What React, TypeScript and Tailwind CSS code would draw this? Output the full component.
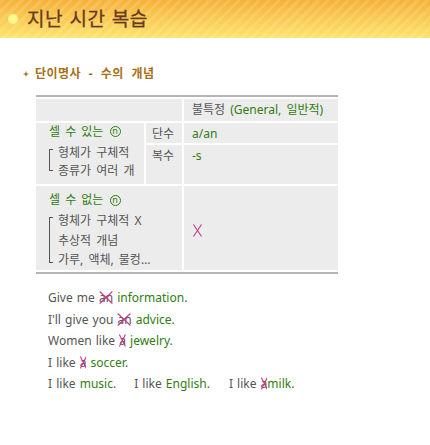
import React from "react";

const F = { fontFamily: '"Noto Sans", "Noto Sans CJK KR", sans-serif' };

function Cross({ w = 10, h = 13 }: { w?: number; h?: number }) {
  return (
    <svg width={w} height={h} viewBox={`0 0 ${w} ${h}`} className="block">
      <line x1="0.5" y1="0.5" x2={w - 0.5} y2={h - 0.5} stroke="#c9358a" strokeWidth="1.1" />
      <line x1={w - 0.5} y1="0.5" x2="0.5" y2={h - 0.5} stroke="#c9358a" strokeWidth="1.1" />
    </svg>
  );
}

function Struck({ children }: { children: React.ReactNode }) {
  return (
    <span className="relative inline-block">
      {children}
      <svg
        className="absolute top-[4px] left-0 w-full h-[13px]"
        viewBox="0 0 10 13"
        preserveAspectRatio="none"
      >
        <line x1="0.5" y1="0.5" x2="9.5" y2="12.5" stroke="#c9358a" strokeWidth="1.1" vectorEffect="non-scaling-stroke" />
        <line x1="9.5" y1="0.5" x2="0.5" y2="12.5" stroke="#c9358a" strokeWidth="1.1" vectorEffect="non-scaling-stroke" />
      </svg>
    </span>
  );
}

const G = ({ children }: { children: React.ReactNode }) => (
  <span className="text-[#2f7d12]">{children}</span>
);

const N = () => (
  <span className="inline-flex items-center justify-center w-[11px] h-[11px] rounded-full border border-[#2f7d12] text-[#2f7d12] text-[9px] leading-none align-[-1px] ml-[1px]">
    <span className="-mt-[2px]">n</span>
  </span>
);

export default function App() {
  return (
    <div className="w-[430px] h-[445px] bg-white text-[#555555] [word-spacing:2px]" style={F}>
      <div className="h-[38px] flex items-center bg-[image:repeating-linear-gradient(135deg,rgba(255,255,255,0.13)_0px,rgba(255,255,255,0.13)_3px,transparent_3px,transparent_7px),linear-gradient(to_bottom,#f6b13a,#fde46d)]">
        <div className="ml-[8px] w-[10px] h-[10px] rounded-full bg-[#fff78c]" />
        <div className="ml-[9px] text-[19px] font-normal text-[#6a3a20] leading-none tracking-[0.5px] [word-spacing:1px] [-webkit-text-stroke:0.3px_#6a3a20]">
          지난 시간 복습
        </div>
      </div>

      <div className="mt-[28px] flex items-center h-[16px]">
        <svg width="6" height="6" viewBox="0 0 6 6" className="ml-[23px]">
          <path d="M3 0 L3.8 2.2 L6 3 L3.8 3.8 L3 6 L2.2 3.8 L0 3 L2.2 2.2 Z" fill="#a66f15" />
        </svg>
        <div className="ml-[6px] text-[12px] font-bold text-[#a66f15] leading-none tracking-[0.5px] [word-spacing:4px]">
          단이명사 - 수의 개념
        </div>
      </div>

      <div className="ml-[36px] mt-[13px] w-[302px]">
        <div className="h-[2px] bg-[#b5b5b5]" />
        <div className="grid grid-cols-[108px_36px_154px] grid-rows-[22px_20px_39px_84px] gap-[2px] py-[2px] text-[12px] leading-[18px]">
          <div className="col-span-2 bg-[#ececec]" />
          <div className="bg-[#ececec] flex items-center pl-[8px] whitespace-nowrap">
            불특정&nbsp;<G>(General, 일반적)</G>
          </div>

          <div className="row-span-2 bg-[#ececec] pl-[13px]">
            <div className="leading-[16px] flex items-center h-[17px]"><G>셀 수 있는</G>&nbsp;<N /></div>
            <div className="flex mt-[4px]">
              <div className="mt-[5px] h-[22px] w-[4px] border-l border-t border-b border-[#555555]" />
              <div className="ml-[5px] leading-[18px] whitespace-nowrap">
                <div>형체가 구체적</div>
                <div>종류가 여러 개</div>
              </div>
            </div>
          </div>
          <div className="bg-[#ececec] flex items-center pl-[6px] pt-[1px]">단수</div>
          <div className="bg-[#ececec] flex items-center pl-[8px] pt-[1px]"><G>a/an</G></div>

          <div className="bg-[#ececec] pl-[6px] pt-[2px]">복수</div>
          <div className="bg-[#ececec] pl-[8px] pt-[2px]"><G>-s</G></div>

          <div className="col-span-2 bg-[#ececec] pl-[13px] pt-[5px]">
            <div className="leading-[18px] flex items-center"><G>셀 수 없는</G>&nbsp;<N /></div>
            <div className="flex mt-[2px]">
              <div className="mt-[6px] mb-[7px] w-[4px] border-l border-t border-b border-[#555555]" />
              <div className="ml-[5px] leading-[19.5px] whitespace-nowrap">
                <div>형체가 구체적 X</div>
                <div>추상적 개념</div>
                <div>가루, 액체, 물컹…</div>
              </div>
            </div>
          </div>
          <div className="bg-[#ececec] flex items-center pl-[9px] pt-[4px]">
            <Cross w={9} h={13} />
          </div>
        </div>
        <div className="h-[2px] bg-[#b5b5b5]" />
      </div>

      <div className="ml-[48px] mt-[13px] text-[12px] leading-[21.5px] [word-spacing:1px]">
        <div>
          Give me <Struck>an</Struck> <G>information</G>.
        </div>
        <div>
          I'll give you <Struck>an</Struck> <G>advice</G>.
        </div>
        <div>
          Women like <Struck>a</Struck> <G>jewelry</G>.
        </div>
        <div>
          I like <Struck>a</Struck> <G>soccer</G>.
        </div>
        <div className="flex whitespace-pre">
          <span>I like <G>music</G>.</span>
          <span className="ml-[18px]">I like <G>English</G>.</span>
          <span className="ml-[19px]">I like <Struck>a</Struck><G>milk</G>.</span>
        </div>
      </div>
    </div>
  );
}
